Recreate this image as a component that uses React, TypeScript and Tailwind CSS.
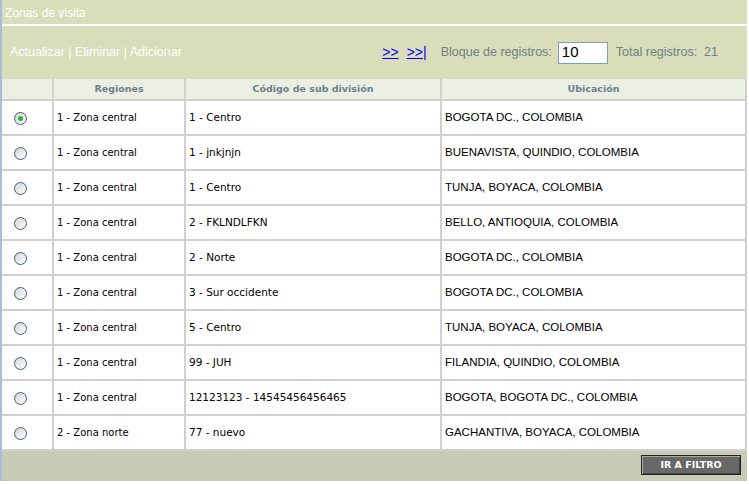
import React from "react";

type Row = { region: string; code: string; place: string };

const rows: Row[] = [
  { region: "1 - Zona central", code: "1 - Centro", place: "BOGOTA DC., COLOMBIA" },
  { region: "1 - Zona central", code: "1 - jnkjnjn", place: "BUENAVISTA, QUINDIO, COLOMBIA" },
  { region: "1 - Zona central", code: "1 - Centro", place: "TUNJA, BOYACA, COLOMBIA" },
  { region: "1 - Zona central", code: "2 - FKLNDLFKN", place: "BELLO, ANTIOQUIA, COLOMBIA" },
  { region: "1 - Zona central", code: "2 - Norte", place: "BOGOTA DC., COLOMBIA" },
  { region: "1 - Zona central", code: "3 - Sur occidente", place: "BOGOTA DC., COLOMBIA" },
  { region: "1 - Zona central", code: "5 - Centro", place: "TUNJA, BOYACA, COLOMBIA" },
  { region: "1 - Zona central", code: "99 - JUH", place: "FILANDIA, QUINDIO, COLOMBIA" },
  { region: "1 - Zona central", code: "12123123 - 14545456456465", place: "BOGOTA, BOGOTA DC., COLOMBIA" },
  { region: "2 - Zona norte", code: "77 - nuevo", place: "GACHANTIVA, BOYACA, COLOMBIA" },
];

const Radio = ({ checked }: { checked?: boolean }) => (
  <span className="inline-flex h-[13px] w-[13px] items-center justify-center rounded-full border border-[#3d5f86] bg-gradient-to-br from-[#d4d4d4] to-[#ffffff]">
    {checked && <span className="h-[5px] w-[5px] rounded-full bg-[#2fb33a]" />}
  </span>
);

export default function App() {
  return (
    <div className="h-[484px] w-[749px] bg-white font-['Liberation_Sans',Arial,sans-serif]">
      <div className="w-[747px] border-l-2 border-[#a9bdd6]">
        {/* title */}
        <div className="flex h-[24px] items-center bg-[#d9ddb9] pl-[3px] pt-[1px] text-[12px] text-white">
          Zonas de visita
        </div>
        <div className="h-[2px] bg-white" />
        {/* toolbar */}
        <div className="flex h-[53px] items-center bg-[#d9ddb9] pl-[8px] pr-[29px] text-[12.5px]">
          <span className="text-white">Actualizar | Eliminar | Adicionar</span>
          <div className="ml-auto flex items-center">
            <a className="text-[14px] text-[#0000ff] underline">&gt;&gt;</a>
            <a className="ml-[8px] text-[14px] text-[#0000ff] underline">&gt;&gt;|</a>
            <span className="ml-[14px] text-[#6f8089]">Bloque de registros:</span>
            <input
              readOnly
              value="10"
              className="ml-[6px] h-[22px] w-[50px] border border-[#7f9db9] bg-white pl-[3px] text-[15px] text-black outline-none"
            />
            <span className="ml-[8px] text-[#6f8089]">Total registros:&nbsp; 21</span>
          </div>
        </div>
        {/* table */}
        <table className="w-[745px] border-collapse font-['DejaVu_Sans',Verdana,sans-serif] text-[10px] text-black">
          <colgroup>
            <col className="w-[51px]" />
            <col className="w-[132px]" />
            <col className="w-[256px]" />
            <col />
          </colgroup>
          <thead>
            <tr className="h-[21px] bg-[#ebeee3] text-[9.5px] text-[#6b808c]">
              <th className="border-2 border-l-0 border-t-0 border-[#d0d0d0]"></th>
              <th className="border-2 border-t-0 border-[#d0d0d0] font-bold">Regiones</th>
              <th className="border-2 border-t-0 border-[#d0d0d0] font-bold">Código de sub división</th>
              <th className="border-2 border-t-0 border-[#d0d0d0] font-bold">Ubicación</th>
            </tr>
          </thead>
          <tbody>
            {rows.map((r, i) => (
              <tr key={i} className="h-[35px] bg-white">
                <td className="border-2 border-l-0 border-[#d0d0d0] text-center align-middle">
                  <span className="relative ml-[-13px] inline-flex align-middle">
                    <Radio checked={i === 0} />
                  </span>
                </td>
                <td className="border-2 border-[#d0d0d0] pl-[3px]">{r.region}</td>
                <td className="border-2 border-[#d0d0d0] pl-[3px] text-[10.5px]">{r.code}</td>
                <td className="border-2 border-[#d0d0d0] pl-[3px] font-['Liberation_Sans',Arial,sans-serif] text-[11.5px]">
                  {r.place}
                </td>
              </tr>
            ))}
          </tbody>
        </table>
        {/* footer */}
        <div className="flex h-[30px] items-start justify-end bg-[#c9cbb7] pr-[6px] pt-[4px]">
          <button className="flex h-[20px] w-[100px] items-center justify-center border border-[#222] bg-[#686868] font-['DejaVu_Sans',Verdana,sans-serif] text-[9.5px] font-bold text-white shadow-[inset_1px_1px_0_#aaa,inset_-1px_-1px_0_#444]">
            IR A FILTRO
          </button>
        </div>
      </div>
    </div>
  );
}
